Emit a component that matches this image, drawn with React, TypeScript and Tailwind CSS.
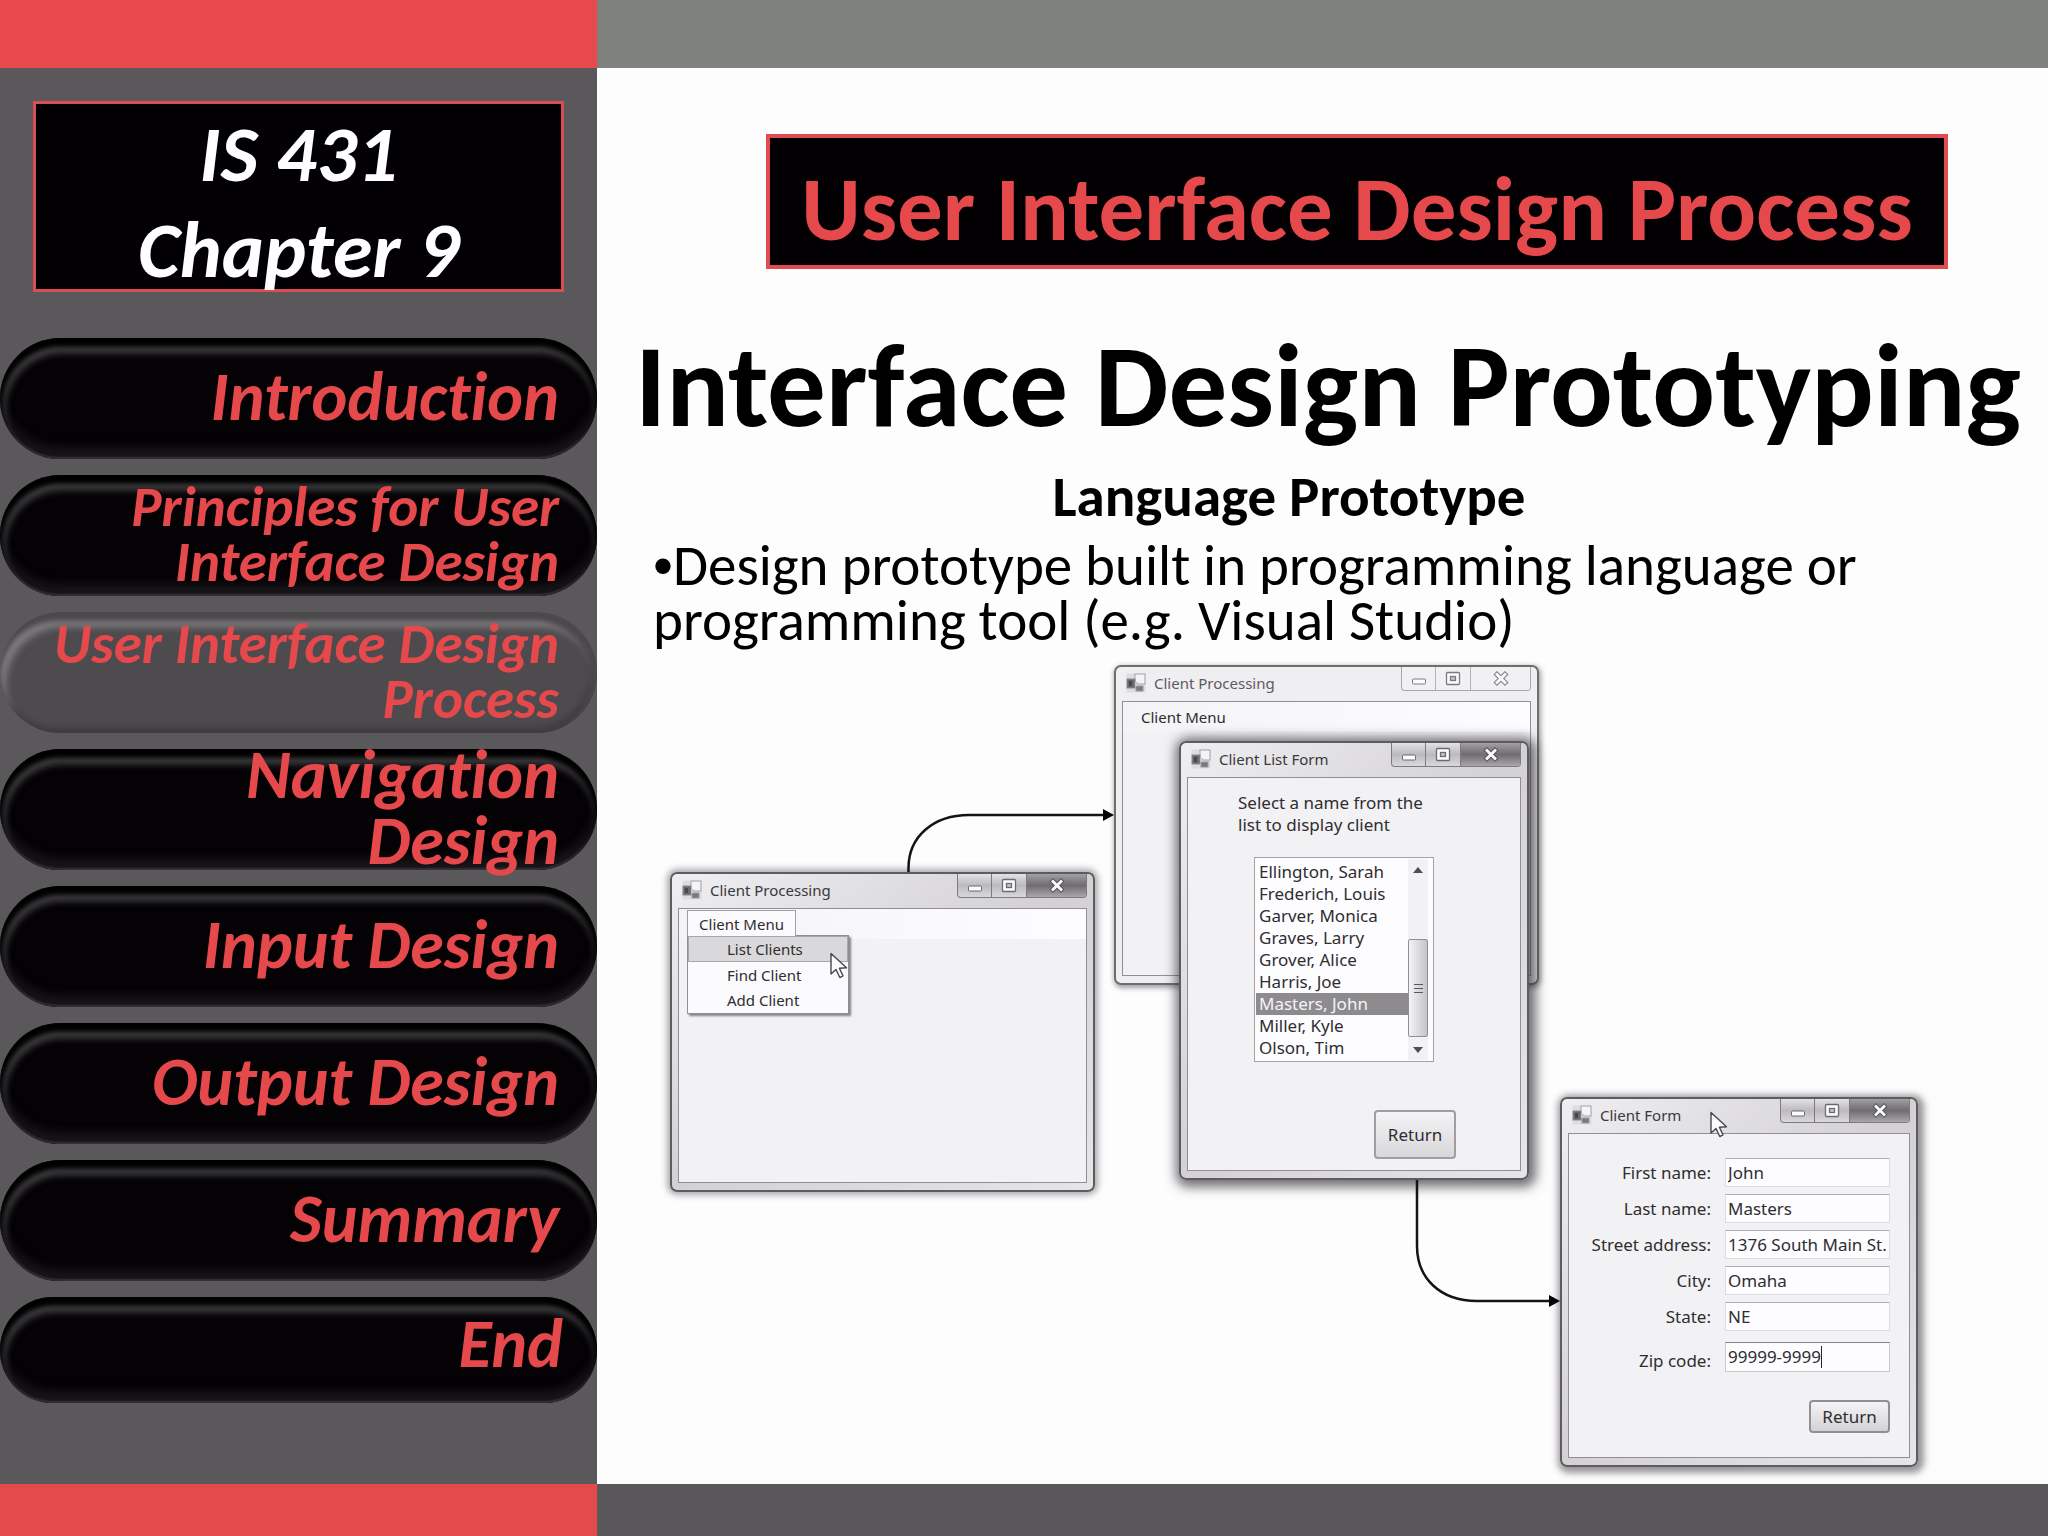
import type { ReactNode } from "react";

const NAV_ITEMS = [
  { label: "Introduction", size: "text-[68px] leading-[66px]" },
  { label: "Principles for User Interface Design", size: "text-[57px] leading-[55px]" },
  { label: "User Interface Design Process", size: "text-[57px] leading-[55px]", active: true },
  { label: "Navigation Design", size: "text-[68px] leading-[66px]" },
  { label: "Input Design", size: "text-[68px] leading-[66px]" },
  { label: "Output Design", size: "text-[68px] leading-[66px]" },
  { label: "Summary", size: "text-[68px] leading-[66px]" },
  { label: "End", size: "text-[68px] leading-[66px]", last: true },
];

const CLIENTS = [
  "Ellington, Sarah",
  "Frederich, Louis",
  "Garver, Monica",
  "Graves, Larry",
  "Grover, Alice",
  "Harris, Joe",
  "Masters, John",
  "Miller, Kyle",
  "Olson, Tim",
];

const FIELDS = [
  { id: "first-name", label: "First name:", value: "John" },
  { id: "last-name", label: "Last name:", value: "Masters" },
  { id: "street", label: "Street address:", value: "1376 South Main St." },
  { id: "city", label: "City:", value: "Omaha" },
  { id: "state", label: "State:", value: "NE" },
];

function FormIcon() {
  return (
    <svg width="20" height="20" viewBox="0 0 20 20" className="shrink-0">
      <rect x="0.5" y="0.5" width="19" height="19" fill="#dddcde" />
      <rect x="9" y="1" width="10" height="10" fill="#f4f3f5" stroke="#a5a3a6" />
      <rect x="1" y="6" width="8" height="9" fill="#6b696c" stroke="#8d8b8e" />
      <rect x="3" y="8" width="3" height="5" fill="#49474a" />
      <rect x="10" y="13" width="7" height="5" fill="#7b797c" stroke="#9b999c" />
      <rect x="9" y="9" width="3" height="4" fill="#c9c7ca" />
    </svg>
  );
}

function Cursor({ className }: { className: string }) {
  return (
    <svg width="20" height="28" viewBox="0 0 20 28" className={className}>
      <path
        d="M2 1.5V22l5-4.5 3.8 8 3.2-1.6-3.6-7.6 7.1-.6z"
        fill="#fcfbfd"
        stroke="#4a484b"
        strokeWidth="1.4"
        strokeLinejoin="round"
      />
    </svg>
  );
}

function WindowButtons({ inactive }: { inactive?: boolean }) {
  const tone = inactive
    ? "bg-[#f1f0f2] border-[#a9a7aa]"
    : "bg-linear-to-b from-[#e3e2e4] via-[#bcbabd] to-[#d9d8da] border-[#7d7b7e]";
  const close = inactive
    ? "bg-[#f1f0f2]"
    : "bg-linear-to-b from-[#a2a0a3] via-[#6f6d70] to-[#a9a7aa]";
  const divider = inactive ? "border-[#b5b3b6]" : "border-[#7d7b7e]";
  const line = inactive ? "#7c7a7d" : "#6d6b6e";
  return (
    <div className={`flex h-6 w-[130px] overflow-hidden rounded-b-[4px] border border-t-0 ${tone}`}>
      <button aria-label="Minimize" className={`flex w-[34px] items-center justify-center border-r ${divider}`}>
        <svg width="16" height="16" viewBox="0 0 16 16">
          <rect x="1.5" y="8" width="13" height="5" rx="1" fill="#fcfbfd" stroke={line} />
        </svg>
      </button>
      <button aria-label="Maximize" className={`flex w-[35px] items-center justify-center border-r ${divider}`}>
        <svg width="16" height="16" viewBox="0 0 16 16">
          <rect x="1.5" y="1.5" width="13" height="12" rx="1" fill="#fcfbfd" stroke={line} strokeWidth="1.3" />
          <rect x="5.5" y="5.5" width="5" height="4" fill="#c5c3c6" stroke={line} strokeWidth="1.3" />
        </svg>
      </button>
      <button aria-label="Close" className={`flex flex-1 items-center justify-center ${close}`}>
        <svg width="18" height="16" viewBox="0 0 18 16">
          <path d="M5 3.5l8 8M13 3.5l-8 8" stroke={inactive ? "#858386" : "#5a585b"} strokeWidth="5" strokeLinecap="square" />
          <path d="M5 3.5l8 8M13 3.5l-8 8" stroke="#fcfbfd" strokeWidth="2.8" strokeLinecap="square" />
        </svg>
      </button>
    </div>
  );
}

type WindowProps = {
  title: string;
  className: string;
  inactive?: boolean;
  children?: ReactNode;
};

function Window({ title, className, inactive, children }: WindowProps) {
  const frame = inactive
    ? "bg-[#efeef0] border-[#6f6d70]"
    : "bg-linear-to-br from-[#efeef0] via-[#d3d1d4] to-[#e6e5e7] border-[#5e5c5f]";
  return (
    <section
      className={`absolute flex flex-col rounded-[7px] border-2 px-[6px] pb-[7px] ${frame} ${className}`}
    >
      <div className="flex h-[34px] shrink-0 items-start justify-between">
        <div className="flex items-center gap-2 pt-[6px] pl-1">
          <FormIcon />
          <h3 className={`text-[15px] leading-5 ${inactive ? "text-[#5d5b5e]" : "text-[#3a383b]"}`}>{title}</h3>
        </div>
        <WindowButtons inactive={inactive} />
      </div>
      <div className="flex flex-1 flex-col border border-[#918f92] bg-[#f2f1f3]">{children}</div>
    </section>
  );
}

function MainMenuWindow() {
  return (
    <Window
      title="Client Processing"
      className="top-[216px] left-[73px] h-[320px] w-[425px] shadow-[0_0_6px_3px_rgba(90,88,92,0.5)]"
    >
      <div className="h-[30px] bg-linear-to-r from-[#f4f3f5] to-[#fdfcfe] pt-px pl-2">
        <button className="relative z-10 block h-[26px] w-[109px] border border-b-0 border-[#a19fa2] bg-[#fbfafc] text-[15px] leading-6">
          Client Menu
        </button>
        <ul className="relative -mt-px w-[162px] border border-[#918f92] bg-[#fbfafc] shadow-[2px_2px_2px_rgba(60,58,62,0.6)]">
          <li>
            <button className="block h-[26px] w-full border border-[#a9a7aa] bg-[#d9d8da] pl-[38px] text-left text-[15px] leading-6">
              List Clients
            </button>
          </li>
          <li>
            <button className="block h-[25px] w-full pl-[39px] text-left text-[15px] leading-6">Find Client</button>
          </li>
          <li>
            <button className="block h-[26px] w-full pl-[39px] text-left text-[15px] leading-6">Add Client</button>
          </li>
          <Cursor className="absolute top-4 -right-px" />
        </ul>
      </div>
    </Window>
  );
}

function ClientListWindow() {
  return (
    <Window
      title="Client List Form"
      className="top-[85px] left-[582px] h-[439px] w-[350px] shadow-[2px_2px_12px_5px_rgba(50,48,52,0.7)]"
    >
      <div className="flex flex-1 flex-col px-[50px] pt-[14px]">
        <p className="w-[220px] text-[17px] leading-[22px]">
          Select a name from the
          <br />
          list to display client
        </p>
        <div className="mt-[21px] ml-4 flex h-[205px] w-[180px] border border-[#a5a3a6] bg-[#fdfcfe] p-px">
          <ul role="listbox" aria-label="Clients" className="w-[152px] pt-[2px]">
            {CLIENTS.map((name) => (
              <li
                key={name}
                role="option"
                aria-selected={name === "Masters, John"}
                className="h-[22px] pl-[3px] text-[17px] leading-[22px] whitespace-nowrap aria-selected:bg-[#8d8b8e] aria-selected:text-[#f5f4f6]"
              >
                {name}
              </li>
            ))}
          </ul>
          <div className="mr-1 flex flex-1 flex-col items-center bg-[#f2f1f3]">
            <svg width="10" height="6" viewBox="0 0 10 6" className="mt-2">
              <path d="M0 6L5 0l5 6z" fill="#504e51" />
            </svg>
            <div className="mt-[66px] flex h-[98px] w-[20px] flex-col items-center justify-center gap-[3px] rounded-[2px] border border-[#918f92] bg-linear-to-r from-[#f4f3f5] to-[#c6c4c7]">
              <span className="h-px w-[9px] bg-[#59575a]" />
              <span className="h-px w-[9px] bg-[#59575a]" />
              <span className="h-px w-[9px] bg-[#59575a]" />
            </div>
            <svg width="10" height="6" viewBox="0 0 10 6" className="mt-[10px]">
              <path d="M0 0l5 6 5-6z" fill="#504e51" />
            </svg>
          </div>
        </div>
        <button className="mt-12 mr-[14px] h-[49px] w-[82px] self-end rounded-[4px] border-2 border-[#a09ea1] bg-linear-to-b from-[#f4f3f5] to-[#d8d7d9] text-[17px]">
          Return
        </button>
      </div>
    </Window>
  );
}

function ClientFormWindow() {
  return (
    <Window
      title="Client Form"
      className="top-[441px] left-[963px] h-[370px] w-[358px] shadow-[2px_2px_7px_4px_rgba(80,78,82,0.6)]"
    >
      <Cursor className="absolute top-3 left-[147px]" />
      <form className="flex flex-col gap-[7px] pt-[24px] pr-[19px]">
        {FIELDS.map((field) => (
          <div key={field.id} className="flex items-center justify-end gap-[14px]">
            <label htmlFor={field.id} className="text-[17px] leading-[22px]">
              {field.label}
            </label>
            <input
              id={field.id}
              defaultValue={field.value}
              className="h-[29px] w-[165px] border border-[#dddcde] border-t-[#b1afb2] bg-[#fdfcfe] pl-[2px] text-[17px]"
            />
          </div>
        ))}
        <div className="mt-1 flex items-end justify-end gap-[14px]">
          <label htmlFor="zip" className="text-[17px] leading-[22px]">
            Zip code:
          </label>
          <div className="flex h-[30px] w-[165px] items-center border border-[#cccacd] border-t-[#858386] bg-[#fdfcfe] pl-[2px]">
            <input id="zip" defaultValue="99999-9999" className="field-sizing-content text-[17px]" />
            <span className="h-[22px] w-px bg-[#29272a]" />
          </div>
        </div>
        <button
          type="button"
          className="mt-[21px] h-[33px] w-[81px] self-end rounded-[4px] border-2 border-[#918f92] bg-linear-to-b from-[#f4f3f5] to-[#d3d2d4] text-[17px] leading-6"
        >
          Return
        </button>
      </form>
    </Window>
  );
}

function Arrows() {
  return (
    <svg className="absolute top-0 left-0 h-[828px] w-[1451px]" viewBox="0 0 1451 828" fill="none">
      <g stroke="#151316" strokeWidth="2.5">
        <path d="M311.5 216V212C311.5 180 337 159 372 159H508" />
        <path d="M820 524V590C820 622 843 645 880 645H954" />
      </g>
      <path d="M506 153l11 6-11 6z" fill="#050306" />
      <path d="M952 639l11 6-11 6z" fill="#050306" />
    </svg>
  );
}

function Sidebar() {
  return (
    <aside className="flex w-[597px] shrink-0 flex-col bg-[#5a585b]">
      <div className="h-[68px] bg-[#e84a4d]" />
      <div className="mx-[33px] mt-[33px] h-[191px] border-[3px] border-[#d94e53] bg-[#020003] pt-[2px] text-center text-[80px] leading-[96px] font-bold text-[#fefdff] italic">
        <div>IS 431</div>
        <div>Chapter 9</div>
      </div>
      <nav className="mt-[46px] flex flex-1 flex-col gap-4 pb-20">
        {NAV_ITEMS.map((item) => (
          <a
            key={item.label}
            href="#"
            className={`flex items-center justify-end rounded-full pl-10 text-right font-bold text-[#e5494c] italic ${item.size} ${
              item.last ? "h-[106px] pr-[34px] pb-3" : "h-[121px] pr-[38px] pb-[3px]"
            } ${
              item.active
                ? "bg-[#4d4b4e] shadow-[inset_-3px_6px_5px_3px_#4b494c,inset_-4px_-6px_6px_#3f3d40,inset_3px_12px_7px_3px_#807e81]"
                : "bg-[#040205] shadow-[inset_0_6px_5px_3px_#000000,inset_2px_12px_7px_3px_#454346,inset_0_-2px_2px_#39373a,inset_0_-12px_8px_#161417]"
            }`}
          >
            <span className={item.label === "Navigation Design" ? "w-[350px]" : ""}>{item.label}</span>
          </a>
        ))}
      </nav>
      <div className="h-[52px] bg-[#e4494c]" />
    </aside>
  );
}

export default function App() {
  return (
    <div className="flex min-h-screen bg-[#fefdfe] font-['Carlito','Open_Sans',sans-serif] text-black [font-variant-ligatures:none]">
      <Sidebar />
      <main className="flex min-w-0 flex-1 flex-col">
        <div className="h-[68px] bg-[#7f817d]" />
        <h2 className="mt-[66px] mr-[100px] ml-[169px] h-[135px] border-4 border-[#df4d51] bg-[#020003] pt-4 text-center text-[91px] leading-[110px] font-bold whitespace-nowrap text-[#e5494c]">
          User Interface Design Process
        </h2>
        <h1 className="mt-[50px] pl-[38px] text-[117px] leading-[134px] font-bold whitespace-nowrap">
          Interface Design Prototyping
        </h1>
        <div className="mb-2 ml-[56px] pt-4 text-[57px] leading-[55px]">
          <p className="mr-[123px] text-center font-bold">Language Prototype</p>
          <p className="mt-[14px]">
            <span className="font-['Liberation_Sans',sans-serif]">•</span>Design prototype built in programming language or
            <br />
            programming tool (e.g. Visual Studio)
          </p>
        </div>
        <div className="relative flex-1 font-['Noto_Sans',sans-serif] text-[#2f2d30]">
          <MainMenuWindow />
          <Window
            title="Client Processing"
            inactive
            className="top-[9px] left-[517px] h-[320px] w-[425px] shadow-[1px_2px_5px_1px_rgba(70,68,72,0.5)]"
          >
            <div className="h-[30px] bg-linear-to-r from-[#f4f3f5] to-[#fdfcfe] pl-[18px] text-[15px] leading-[30px]">
              Client Menu
            </div>
          </Window>
          <ClientListWindow />
          <ClientFormWindow />
          <Arrows />
        </div>
        <div className="h-[52px] bg-[#59575a]" />
      </main>
    </div>
  );
}
